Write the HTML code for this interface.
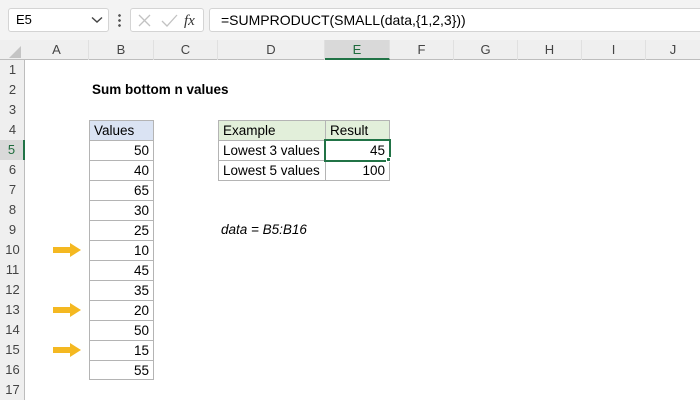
<!DOCTYPE html>
<html><head><style>
*{margin:0;padding:0;box-sizing:border-box}
body{width:700px;height:400px;overflow:hidden;background:#fff;font-family:"Liberation Sans",Calibri,sans-serif;font-size:14px;color:#000;position:relative}
.a{position:absolute}
.ch{position:absolute;top:40px;height:20px;line-height:20px;text-align:center;color:#444;font-size:13px;border-right:1px solid #e0e0e0}
.rh{position:absolute;left:0;width:25px;height:20px;line-height:20px;text-align:center;color:#444;font-size:13px}
.c{position:absolute;height:21px;line-height:20px;padding:0 4px;border:1px solid #b4b4b4;font-size:13.5px}
.r{text-align:right}
</style></head><body>
<div class="a" style="left:0;top:0;width:700px;height:40px;background:#f3f3f3"></div>
<div class="a" style="left:8px;top:8px;width:101px;height:24px;background:#fff;border:1px solid #d4d4d4;border-radius:3px;font-size:13px;line-height:22px;padding-left:7px">E5</div>
<svg class="a" style="left:91px;top:16px" width="12" height="8"><path d="M1 1.5 L6 6 L11 1.5" stroke="#444" stroke-width="1.4" fill="none"/></svg>
<div class="a" style="left:118px;top:13px;width:3px;height:14px;background:radial-gradient(circle,#555 1.2px,transparent 1.5px) 0 0/3px 5px"></div>
<div class="a" style="left:130px;top:8px;width:74px;height:24px;background:#fff;border:1px solid #d4d4d4;border-radius:3px"></div>
<svg class="a" style="left:137px;top:13px" width="62" height="16"><path d="M2 2 L13 13 M13 2 L2 13" stroke="#c2c2c2" stroke-width="1.3"/><path d="M25 8 L30 13 L40 2" stroke="#c2c2c2" stroke-width="1.3" fill="none"/><text x="47" y="12" font-family="Liberation Serif" font-style="italic" font-size="15" fill="#333">fx</text></svg>
<div class="a" style="left:209px;top:8px;width:500px;height:24px;background:#fff;border:1px solid #d4d4d4;border-radius:3px;font-size:14px;line-height:22px;padding-left:11px">=SUMPRODUCT(SMALL(data,{1,2,3}))</div>
<div class="a" style="left:0;top:40px;width:700px;height:20px;background:#efefef;border-bottom:1px solid #bdbdbd"></div>
<div class="a" style="left:0;top:60px;width:25px;height:340px;background:#efefef;border-right:1px solid #bdbdbd"></div>
<svg class="a" style="left:8px;top:45px" width="14" height="14"><path d="M13 1 L13 13 L1 13 Z" fill="#c4c4c4"/></svg>
<div class="ch" style="left:25px;width:64px">A</div>
<div class="ch" style="left:89px;width:65px">B</div>
<div class="ch" style="left:154px;width:64px">C</div>
<div class="ch" style="left:218px;width:107px">D</div>
<div class="ch" style="left:325px;width:65px;background:#d9d9d9;color:#1e6b3c;border-bottom:2px solid #217346">E</div>
<div class="ch" style="left:390px;width:64px">F</div>
<div class="ch" style="left:454px;width:64px">G</div>
<div class="ch" style="left:518px;width:64px">H</div>
<div class="ch" style="left:582px;width:64px">I</div>
<div class="ch" style="left:646px;width:54px;border:none">J</div>
<div class="rh" style="top:60px">1</div><div class="rh" style="top:80px">2</div><div class="rh" style="top:100px">3</div><div class="rh" style="top:120px">4</div>
<div class="rh" style="top:140px;background:#d9d9d9;color:#1e6b3c;border-right:2px solid #217346">5</div>
<div class="rh" style="top:160px">6</div><div class="rh" style="top:180px">7</div><div class="rh" style="top:200px">8</div><div class="rh" style="top:220px">9</div><div class="rh" style="top:240px">10</div><div class="rh" style="top:260px">11</div><div class="rh" style="top:280px">12</div><div class="rh" style="top:300px">13</div><div class="rh" style="top:320px">14</div><div class="rh" style="top:340px">15</div><div class="rh" style="top:360px">16</div><div class="rh" style="top:380px">17</div>
<div class="a" style="left:92px;top:80px;line-height:20px;font-weight:bold;font-size:13.5px">Sum bottom n values</div>
<div class="c" style="left:89px;top:120px;width:65px;background:#dae3f3">Values</div>
<div class="c r" style="left:89px;top:140px;width:65px">50</div>
<div class="c r" style="left:89px;top:160px;width:65px">40</div>
<div class="c r" style="left:89px;top:180px;width:65px">65</div>
<div class="c r" style="left:89px;top:200px;width:65px">30</div>
<div class="c r" style="left:89px;top:220px;width:65px">25</div>
<div class="c r" style="left:89px;top:240px;width:65px">10</div>
<div class="c r" style="left:89px;top:260px;width:65px">45</div>
<div class="c r" style="left:89px;top:280px;width:65px">35</div>
<div class="c r" style="left:89px;top:300px;width:65px">20</div>
<div class="c r" style="left:89px;top:320px;width:65px">50</div>
<div class="c r" style="left:89px;top:340px;width:65px">15</div>
<div class="c r" style="left:89px;top:360px;width:65px;height:20px">55</div>
<div class="c" style="left:218px;top:120px;width:108px;background:#e2efda">Example</div>
<div class="c" style="left:325px;top:120px;width:65px;background:#e2efda">Result</div>
<div class="c" style="left:218px;top:140px;width:108px">Lowest 3 values</div>
<div class="c r" style="left:325px;top:140px;width:65px">45</div>
<div class="c" style="left:218px;top:160px;width:108px">Lowest 5 values</div>
<div class="c r" style="left:325px;top:160px;width:65px">100</div>
<div class="a" style="left:324px;top:139px;width:67px;height:23px;border:2px solid #217346"></div>
<div class="a" style="left:386px;top:157px;width:5px;height:5px;background:#217346;border:1px solid #fff"></div>
<div class="a" style="left:221px;top:220px;line-height:20px;font-style:italic;font-size:13.5px">data = B5:B16</div>
<svg class="a" style="left:52px;top:242px" width="30" height="16"><path d="M1 5 H18 V1 L29 8 L18 15 V11 H1 Z" fill="#f4b821"/></svg>
<svg class="a" style="left:52px;top:302px" width="30" height="16"><path d="M1 5 H18 V1 L29 8 L18 15 V11 H1 Z" fill="#f4b821"/></svg>
<svg class="a" style="left:52px;top:342px" width="30" height="16"><path d="M1 5 H18 V1 L29 8 L18 15 V11 H1 Z" fill="#f4b821"/></svg>
</body></html>
